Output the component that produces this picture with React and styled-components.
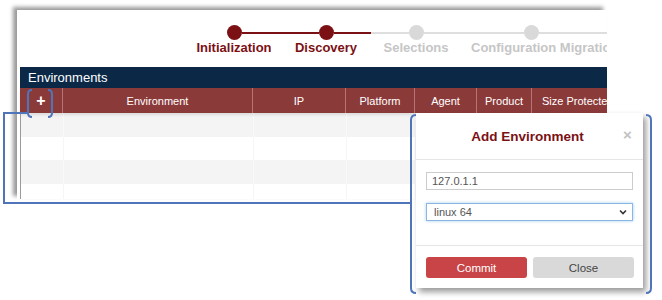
import React from 'react';
import styled, { createGlobalStyle } from 'styled-components';

const RED = '#7b1115';
const GRAY = '#d9d9d9';
const CALLOUT = '#4f74b9';

const GlobalStyle = createGlobalStyle`
  body {
    margin: 0;
    background: #ffffff;
    font-family: "Liberation Sans", Arial, sans-serif;
  }
`;

const PAGE = styled.div`
  position: relative;
  width: 662px;
  height: 300px;
  overflow: hidden;
  background: #ffffff;
`;

const CARD = styled.div`
  margin: 10px 0 0 17px;
  width: 590px;
  height: 189px;
  padding-left: 3px;
  box-sizing: border-box;
  background: #ffffff;
  box-shadow: -4px -3px 4px rgba(0, 0, 0, 0.4);
  overflow: hidden;
  display: flex;
  flex-direction: column;
`;

const STEPPER = styled.div`
  display: flex;
  height: 57px;
  padding: 15px 0 0 167px;
  box-sizing: border-box;
`;

const STEP = styled.div`
  width: ${(p) => p.$w}px;
  flex: none;
  display: flex;
  flex-direction: column;
  align-items: ${(p) => (p.$start ? 'stretch' : 'center')};
`;

const TRACK = styled.div`
  display: flex;
  align-items: center;
  width: 100%;
  height: 15px;
`;

const LINE = styled.div`
  height: 2px;
  flex: ${(p) => (p.$len ? 'none' : '1')};
  width: ${(p) => (p.$len ? `${p.$len}px` : 'auto')};
  background: ${(p) => (p.$hide ? 'transparent' : p.$on ? RED : '#dedede')};
`;

const DOT = styled.div`
  width: 15px;
  height: 15px;
  flex: none;
  border-radius: 50%;
  background: ${(p) => (p.$on ? RED : GRAY)};
`;

const LABEL = styled.div`
  font-size: 13px;
  line-height: 15px;
  font-weight: 700;
  white-space: nowrap;
  color: ${(p) => (p.$on ? RED : '#c6c6c6')};
  padding-left: ${(p) => (p.$start ? '10px' : '0')};
`;

const BAR = styled.div`
  height: 21px;
  line-height: 21px;
  background: #0b2947;
  color: #ffffff;
  font-size: 13px;
  padding-left: 8px;
`;

const COLS = '43px 190px 93px 69px 62px 55px 110px';

const HEAD = styled.div`
  display: grid;
  grid-template-columns: ${COLS};
  height: 25px;
  background: #8b3a3a;
  box-shadow: 0 2px 3px rgba(0, 0, 0, 0.1);
  position: relative;
  z-index: 1;
`;

const TH = styled.div`
  display: flex;
  align-items: center;
  justify-content: center;
  color: #ffffff;
  font-size: ${(p) => (p.$plus ? '16px' : '11px')};
  font-weight: ${(p) => (p.$plus ? 700 : 400)};
  white-space: nowrap;
  overflow: hidden;
  border-right: 1px solid #b87474;
  &:last-child {
    border-right: none;
    justify-content: flex-start;
    padding-left: 10px;
  }
`;

const ROW = styled.div`
  display: grid;
  grid-template-columns: ${COLS};
  height: ${(p) => p.$h}px;
  background: ${(p) => (p.$odd ? '#f4f4f4' : '#ffffff')};
  border-left: 1px solid #9a9a9a;
`;

const TD = styled.div`
  border-right: 1px solid ${(p) => (p.$odd ? '#f9f9f9' : '#f6f6f6')};
`;

const MODAL = styled.div`
  position: absolute;
  left: 416px;
  top: 113px;
  width: 227px;
  height: 175px;
  z-index: 2;
  background: #ffffff;
  box-shadow: 3px 4px 6px rgba(0, 0, 0, 0.4);
  display: flex;
  flex-direction: column;
`;

const MODAL_HEAD = styled.div`
  height: 47px;
  display: grid;
  grid-template-columns: 24px 1fr 24px;
  align-items: center;
  border-bottom: 1px solid #e6e6e6;
  box-sizing: border-box;
`;

const TITLE = styled.div`
  grid-column: 2;
  text-align: center;
  font-size: 13.5px;
  font-weight: 700;
  color: ${RED};
  padding-right: 4px;
`;

const CLOSE_X = styled.div`
  font-size: 15px;
  font-weight: 700;
  color: #c2c2c2;
  text-align: left;
  padding-left: 4px;
  margin-top: -4px;
`;

const MODAL_BODY = styled.div`
  flex: 1;
  padding: 12px 10px 0;
  display: flex;
  flex-direction: column;
  gap: 13px;
`;

const FIELD = styled.div`
  height: 18px;
  box-sizing: border-box;
  border: 1px solid ${(p) => (p.$focus ? '#8db7e2' : '#cccccc')};
  box-shadow: ${(p) => (p.$focus ? '0 0 3px rgba(102, 175, 233, 0.6)' : 'none')};
  font-size: 11px;
  line-height: 16px;
  color: #555555;
  padding-left: ${(p) => (p.$focus ? '7px' : '5px')};
  display: flex;
  align-items: center;
  justify-content: space-between;
`;

const CHEVRON = styled.svg`
  width: 10px;
  height: 10px;
  margin-right: 4px;
`;

const MODAL_FOOT = styled.div`
  height: 43px;
  border-top: 1px solid #e6e6e6;
  box-sizing: border-box;
  padding: 11px 9px 0 10px;
  display: flex;
  gap: 6px;
`;

const BUTTON = styled.button`
  flex: 1;
  height: 21px;
  border: none;
  border-radius: 3px;
  font-family: "Liberation Sans", Arial, sans-serif;
  font-size: 11.5px;
  background: ${(p) => (p.$primary ? '#c84446' : '#d9d9d9')};
  color: ${(p) => (p.$primary ? '#ffffff' : '#444444')};
  padding: 0;
`;

const OVERLAY = styled.svg`
  position: absolute;
  left: 0;
  top: 0;
  z-index: 3;
  pointer-events: none;
`;

const steps = [
  { label: 'Initialization', w: 94, on: true, left: 'hide', right: 'on' },
  { label: 'Discovery', w: 90, on: true, left: 'on', right: 'on' },
  { label: 'Selections', w: 90, on: false, left: 'off', right: 'off' },
  { label: 'Configuration Migration', w: 170, on: false, left: 'off', right: 'off', lead: 63 },
];

const columns = ['+', 'Environment', 'IP', 'Platform', 'Agent', 'Product', 'Size Protected'];
const rows = [24, 23, 24, 15];

const App = () => {
  return (
    <PAGE>
      <GlobalStyle />
      <CARD>
        <STEPPER>
          {steps.map((s) => (
            <STEP key={s.label} $w={s.w} $start={!!s.lead}>
              <TRACK>
                <LINE $len={s.lead} $hide={s.left === 'hide'} $on={s.left === 'on'} />
                <DOT $on={s.on} />
                <LINE $hide={s.right === 'hide'} $on={s.right === 'on'} />
              </TRACK>
              <LABEL $on={s.on} $start={!!s.lead}>{s.label}</LABEL>
            </STEP>
          ))}
        </STEPPER>
        <BAR>Environments</BAR>
        <HEAD>
          {columns.map((c) => (
            <TH key={c} $plus={c === '+'}>{c}</TH>
          ))}
        </HEAD>
        {rows.map((h, i) => (
          <ROW key={i} $h={h} $odd={i % 2 === 0}>
            {columns.map((c) => (
              <TD key={c} $odd={i % 2 === 0} />
            ))}
          </ROW>
        ))}
      </CARD>

      <MODAL>
        <MODAL_HEAD>
          <TITLE>Add Environment</TITLE>
          <CLOSE_X>×</CLOSE_X>
        </MODAL_HEAD>
        <MODAL_BODY>
          <FIELD>127.0.1.1</FIELD>
          <FIELD $focus>
            linux 64
            <CHEVRON viewBox="0 0 10 10">
              <path d="M2 3.5 L5 6.5 L8 3.5" fill="none" stroke="#333" strokeWidth="1.6" />
            </CHEVRON>
          </FIELD>
        </MODAL_BODY>
        <MODAL_FOOT>
          <BUTTON $primary>Commit</BUTTON>
          <BUTTON>Close</BUTTON>
        </MODAL_FOOT>
      </MODAL>

      <OVERLAY width="662" height="300" viewBox="0 0 662 300">
        <g fill="none" stroke={CALLOUT} strokeWidth="2">
          <path d="M32 90 Q28 90 28 94 L28 113 Q28 117 32 117" />
          <path d="M48 90 Q52 90 52 94 L52 113 Q52 117 48 117" />
          <path d="M28 113 L4 113 L4 203 L411 203" />
          <path d="M416 115 Q411 115 411 120 L411 288 Q411 293 416 293" />
          <path d="M646 115 Q651 115 651 120 L651 288 Q651 293 646 293" />
        </g>
      </OVERLAY>
    </PAGE>
  );
};

export default App;
